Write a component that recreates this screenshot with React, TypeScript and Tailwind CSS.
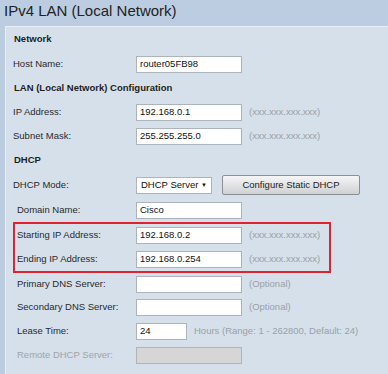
import type { ReactNode } from 'react';

function Input({ value = '', width = 'w-[106px]', disabled = false }: { value?: string; width?: string; disabled?: boolean }) {
  return (
    <div
      className={`${width} h-[17px] flex items-center px-[3px] border border-[#adb3ba] ${
        disabled ? 'bg-[#d6d6d6] border-[#b3b3b3]' : 'bg-white'
      } text-[#111]`}
    >
      {value}
    </div>
  );
}

function Hint({ children }: { children: ReactNode }) {
  return <span className="ml-[7px] text-[#9aa0a6]">{children}</span>;
}

function Row({
  label,
  children,
  inner = false,
  dhcp = false,
  height = 'h-[24px]',
  muted = false,
}: {
  label: string;
  children: ReactNode;
  inner?: boolean;
  dhcp?: boolean;
  height?: string;
  muted?: boolean;
}) {
  // inputs always line up at x=136
  const pad = inner ? 'pl-[2px]' : dhcp ? 'pl-[11px]' : 'pl-[7px]';
  const lw = inner || dhcp ? 'w-[119px]' : 'w-[123px]';
  return (
    <div className={`flex items-center ${height} ${pad}`}>
      <span className={`${lw} shrink-0 ${muted ? 'text-[#a0a4a8]' : 'text-[#2a2a2a]'}`}>{label}</span>
      {children}
    </div>
  );
}

function Heading({ children, height = 'h-[24px]' }: { children: ReactNode; height?: string }) {
  return <div className={`flex items-center ${height} pl-[8px] font-bold text-[#1e1e1e]`}>{children}</div>;
}

export default function App() {
  const ipHint = '(xxx.xxx.xxx.xxx)';

  return (
    <div className="w-[388px] h-[374px] overflow-hidden bg-[#bccde1] font-['Liberation_Sans',Arial,sans-serif] text-[9.5px]">
      <div className="h-[26px] flex items-center pl-[4px] pb-[3px] text-[15px] text-[#222]">IPv4 LAN (Local Network)</div>

      <div className="ml-[5px] h-[348px] bg-[#d5e0eb] border-l border-t border-[#e8eef5]">
        <Heading height="h-[25px]">Network</Heading>
        <Row label="Host Name:">
          <Input value="router05FB98" />
        </Row>

        <Heading>LAN (Local Network) Configuration</Heading>
        <Row label="IP Address:">
          <Input value="192.168.0.1" />
          <Hint>{ipHint}</Hint>
        </Row>
        <Row label="Subnet Mask:">
          <Input value="255.255.255.0" />
          <Hint>{ipHint}</Hint>
        </Row>

        <Heading>DHCP</Heading>
        <Row label="DHCP Mode:" height="h-[26px]">
          <div className="w-[76px] h-[17px] flex items-center justify-between px-[4px] bg-white border border-[#adb3ba] text-[#111]">
            <span>DHCP Server</span>
            <span className="text-[6px]">▼</span>
          </div>
          <button className="ml-[10px] w-[138px] h-[20px] rounded-[2px] border border-[#8c8f93] bg-gradient-to-b from-[#f6f6f6] to-[#cfd1d3] text-[#222] text-[9.5px]">
            Configure Static DHCP
          </button>
        </Row>
        <Row label="Domain Name:" dhcp>
          <Input value="Cisco" />
        </Row>

        <div className="ml-[7px] w-[318px] border-2 border-[#e0232e]">
          <Row label="Starting IP Address:" inner height="h-[23px]">
            <Input value="192.168.0.2" />
            <Hint>{ipHint}</Hint>
          </Row>
          <Row label="Ending IP Address:" inner>
            <Input value="192.168.0.254" />
            <Hint>{ipHint}</Hint>
          </Row>
        </div>

        <Row label="Primary DNS Server:" dhcp height="h-[22px]">
          <Input />
          <Hint>(Optional)</Hint>
        </Row>
        <Row label="Secondary DNS Server:" dhcp>
          <Input />
          <Hint>(Optional)</Hint>
        </Row>
        <Row label="Lease Time:" dhcp>
          <Input value="24" width="w-[51px]" />
          <Hint>Hours (Range: 1 - 262800, Default: 24)</Hint>
        </Row>
        <Row label="Remote DHCP Server:" dhcp muted height="h-[25px]">
          <Input disabled />
        </Row>
      </div>
    </div>
  );
}
